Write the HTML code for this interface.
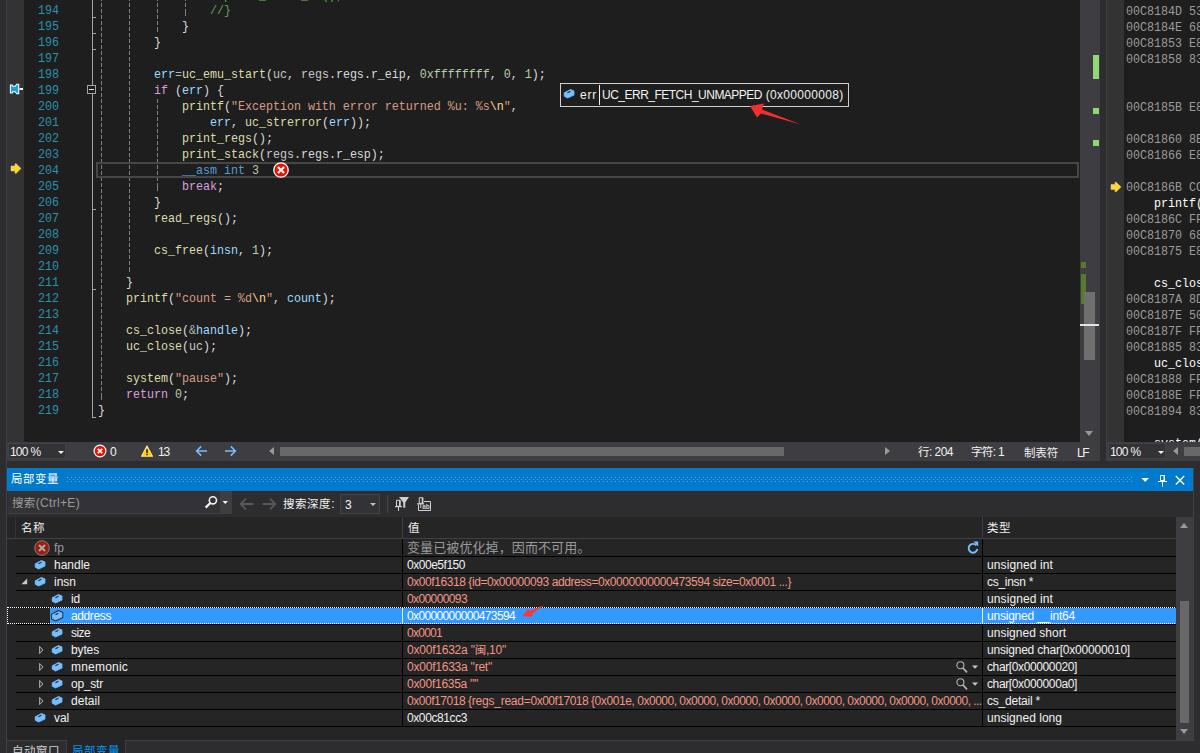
<!DOCTYPE html>
<html lang="zh-CN">
<head>
<meta charset="utf-8">
<title>Visual Studio - 局部变量</title>
<style>
*{box-sizing:border-box;margin:0;padding:0}
html,body{width:1200px;height:753px;overflow:hidden;background:#2d2d30}
body{position:relative;font-family:"Liberation Sans","Noto Sans CJK SC",sans-serif;font-size:12px;color:#f1f1f1}
.abs{position:absolute}
.ui{font-family:"Liberation Sans","Noto Sans CJK SC",sans-serif;font-size:12px;white-space:pre}
#ed{position:absolute;left:0;top:0;width:1100px;height:442px;background:#1e1e1e;overflow:hidden}
.mono{font-family:"Liberation Mono","DejaVu Sans Mono",monospace;font-size:11.7px;letter-spacing:-0.021px;white-space:pre}
.cl{position:absolute;height:16px;line-height:16px;transform:scaleY(1.1);transform-origin:0 11px;margin-top:1px}
.ln{position:absolute;left:38px;width:21px;height:16px;line-height:16px;color:#2b91af;text-align:right;transform:scaleY(1.1);transform-origin:0 11px;margin-top:1px}
.p{color:#dcdcdc}.v{color:#9cdcfe}.f{color:#dcdcaa}.k{color:#569cd6}.c{color:#d8a0df}
.s{color:#d69d85}.n{color:#b5cea8}.m{color:#57a64a}.e{color:#ffd68f}.o{color:#b4b4b4}.mb{color:#dadada}.gv{color:#c8c8c8}
.g{position:absolute;width:1px;background:repeating-linear-gradient(to bottom,#808080 0,#808080 4px,transparent 4px,transparent 6px)}
</style>
</head>
<body>

<div id="ed">
<div class="abs" style="left:0;top:0;width:6px;height:442px;background:#2d2d30"></div>
<div class="abs" style="left:6px;top:0;width:1px;height:442px;background:#3f3f46"></div>
<div class="abs" style="left:7px;top:0;width:17px;height:442px;background:#333333"></div>
<div class="g" style="left:101px;top:0px;height:400px;background-position:0 -3px"></div>
<div class="g" style="left:129px;top:0px;height:272px;background-position:0 -3px"></div>
<div class="g" style="left:157px;top:0px;height:32px;background-position:0 -3px"></div>
<div class="g" style="left:157px;top:98px;height:94px;background-position:0 -5px"></div>
<div class="g" style="left:185px;top:0px;height:16px;background-position:0 -3px"></div>
<div class="abs" style="left:92px;top:0;width:1px;height:418px;background:#a5a5a5"></div>
<div class="abs" style="left:92px;top:17px;width:4px;height:1px;background:#a5a5a5"></div>
<div class="abs" style="left:92px;top:33px;width:4px;height:1px;background:#a5a5a5"></div>
<div class="abs" style="left:92px;top:49px;width:4px;height:1px;background:#a5a5a5"></div>
<div class="abs" style="left:92px;top:209px;width:4px;height:1px;background:#a5a5a5"></div>
<div class="abs" style="left:92px;top:289px;width:4px;height:1px;background:#a5a5a5"></div>
<div class="abs" style="left:92px;top:417px;width:4px;height:1px;background:#a5a5a5"></div>
<div class="abs" style="left:87px;top:85px;width:9px;height:9px;background:#1e1e1e;border:1px solid #a5a5a5"></div>
<div class="abs" style="left:89px;top:89px;width:5px;height:1px;background:#e6e6e6"></div>
<div class="abs" style="left:96px;top:162px;width:983px;height:16px;border:2px solid #464646"></div>
<div class="ln mono" style="top:-13px">193</div>
<div class="cl mono" style="left:210px;top:-13px"><span class="m">//print_stack_ex();</span></div>
<div class="ln mono" style="top:2px">194</div>
<div class="cl mono" style="left:210px;top:2px"><span class="m">//}</span></div>
<div class="ln mono" style="top:18px">195</div>
<div class="cl mono" style="left:182px;top:18px"><span class="p">}</span></div>
<div class="ln mono" style="top:34px">196</div>
<div class="cl mono" style="left:154px;top:34px"><span class="p">}</span></div>
<div class="ln mono" style="top:50px">197</div>
<div class="ln mono" style="top:66px">198</div>
<div class="cl mono" style="left:154px;top:66px"><span class="v">err</span><span class="o">=</span><span class="f">uc_emu_start</span><span class="p">(</span><span class="gv">uc</span><span class="p">, </span><span class="gv">regs</span><span class="p">.</span><span class="mb">regs</span><span class="p">.</span><span class="mb">r_eip</span><span class="p">, </span><span class="n">0xffffffff</span><span class="p">, </span><span class="n">0</span><span class="p">, </span><span class="n">1</span><span class="p">);</span></div>
<div class="ln mono" style="top:82px">199</div>
<div class="cl mono" style="left:154px;top:82px"><span class="c">if</span><span class="p"> (</span><span class="v">err</span><span class="p">) {</span></div>
<div class="ln mono" style="top:98px">200</div>
<div class="cl mono" style="left:182px;top:98px"><span class="f">printf</span><span class="p">(</span><span class="s">"Exception with error returned %u: %s</span><span class="e">\n</span><span class="s">"</span><span class="p">,</span></div>
<div class="ln mono" style="top:114px">201</div>
<div class="cl mono" style="left:210px;top:114px"><span class="v">err</span><span class="p">, </span><span class="f">uc_strerror</span><span class="p">(</span><span class="v">err</span><span class="p">));</span></div>
<div class="ln mono" style="top:130px">202</div>
<div class="cl mono" style="left:182px;top:130px"><span class="f">print_regs</span><span class="p">();</span></div>
<div class="ln mono" style="top:146px">203</div>
<div class="cl mono" style="left:182px;top:146px"><span class="f">print_stack</span><span class="p">(</span><span class="gv">regs</span><span class="p">.</span><span class="mb">regs</span><span class="p">.</span><span class="mb">r_esp</span><span class="p">);</span></div>
<div class="ln mono" style="top:162px">204</div>
<div class="cl mono" style="left:182px;top:162px"><span class="k">__asm</span><span class="p"> </span><span class="k">int</span><span class="p"> </span><span class="n">3</span></div>
<div class="ln mono" style="top:178px">205</div>
<div class="cl mono" style="left:182px;top:178px"><span class="c">break</span><span class="p">;</span></div>
<div class="ln mono" style="top:194px">206</div>
<div class="cl mono" style="left:154px;top:194px"><span class="p">}</span></div>
<div class="ln mono" style="top:210px">207</div>
<div class="cl mono" style="left:154px;top:210px"><span class="f">read_regs</span><span class="p">();</span></div>
<div class="ln mono" style="top:226px">208</div>
<div class="ln mono" style="top:242px">209</div>
<div class="cl mono" style="left:154px;top:242px"><span class="f">cs_free</span><span class="p">(</span><span class="v">insn</span><span class="p">, </span><span class="n">1</span><span class="p">);</span></div>
<div class="ln mono" style="top:258px">210</div>
<div class="ln mono" style="top:274px">211</div>
<div class="cl mono" style="left:126px;top:274px"><span class="p">}</span></div>
<div class="ln mono" style="top:290px">212</div>
<div class="cl mono" style="left:126px;top:290px"><span class="f">printf</span><span class="p">(</span><span class="s">"count = %d</span><span class="e">\n</span><span class="s">"</span><span class="p">, </span><span class="v">count</span><span class="p">);</span></div>
<div class="ln mono" style="top:306px">213</div>
<div class="ln mono" style="top:322px">214</div>
<div class="cl mono" style="left:126px;top:322px"><span class="f">cs_close</span><span class="p">(</span><span class="o">&amp;</span><span class="v">handle</span><span class="p">);</span></div>
<div class="ln mono" style="top:338px">215</div>
<div class="cl mono" style="left:126px;top:338px"><span class="f">uc_close</span><span class="p">(</span><span class="gv">uc</span><span class="p">);</span></div>
<div class="ln mono" style="top:354px">216</div>
<div class="ln mono" style="top:370px">217</div>
<div class="cl mono" style="left:126px;top:370px"><span class="f">system</span><span class="p">(</span><span class="s">"pause"</span><span class="p">);</span></div>
<div class="ln mono" style="top:386px">218</div>
<div class="cl mono" style="left:126px;top:386px"><span class="c">return</span><span class="p"> </span><span class="n">0</span><span class="p">;</span></div>
<div class="ln mono" style="top:402px">219</div>
<div class="cl mono" style="left:98px;top:402px"><span class="p">}</span></div>
<svg class="abs" style="left:0;top:0" width="30" height="200" viewBox="0 0 30 200">
<polygon points="10.9,85.6 12,85.6 12.6,86.8 15.4,86.8 17,84.7 18.2,84.7 18.2,93.3 17,93.3 15.4,91.2 12.6,91.2 12,92.4 10.9,92.4" fill="#ffffff" stroke="#ffffff" stroke-width="2.1" stroke-linejoin="miter"/>
<polygon points="10.9,85.6 12,85.6 12.6,86.8 15.4,86.8 17,84.7 18.2,84.7 18.2,93.3 17,93.3 15.4,91.2 12.6,91.2 12,92.4 10.9,92.4" fill="#1ba1e2"/>
<rect x="19.5" y="88" width="3.5" height="2" fill="#f4f4f4"/>
<polygon points="11,166 15,166 15,163.8 16.2,163.8 21,168.5 16.2,173.2 15,173.2 15,171 11,171" fill="#ffd81e" stroke="#c8c8c8" stroke-width="0.6"/>
</svg>
<svg class="abs" style="left:273px;top:162px" width="16" height="16" viewBox="0 0 16 16">
<circle cx="8" cy="8" r="7.2" fill="#e41400" stroke="#ffffff" stroke-width="1.3"/>
<path d="M4.9 4.9 L11.1 11.1 M11.1 4.9 L4.9 11.1" stroke="#ffffff" stroke-width="2.1" stroke-linecap="butt"/>
</svg>
<div class="abs" style="left:560px;top:83px;width:289px;height:24px;background:#1e1e1e;border:1px solid #d0d0d0"></div>
<svg class="abs" style="left:562.5px;top:88px" width="12" height="11" viewBox="0 0 12 11"><polygon points="1.2,4.8 7.4,1.5 11,2.9 11,7.1 4.6,10 1.2,8.2" fill="#75beff" stroke="#75beff" stroke-width="0.8" stroke-linejoin="round"/><path d="M4.4 4.7 L7.4 3.3" stroke="#1e1e1e" stroke-width="1.1"/></svg>
<div class="abs ui" style="left:580px;top:87px;line-height:16px;color:#f1f1f1;letter-spacing:0.778px;">err</div>
<div class="abs" style="left:599px;top:85px;width:1px;height:20px;background:#f1f1f1"></div>
<div class="abs ui" style="left:602px;top:87px;line-height:16px;color:#f1f1f1;letter-spacing:-0.509px;">UC_ERR_FETCH_UNMAPPED</div>
<div class="abs ui" style="left:762px;top:87px;line-height:16px;color:#f1f1f1;letter-spacing:0.316px;"> (0x00000008)</div>
<svg class="abs" style="left:740px;top:100px" width="70" height="30" viewBox="740 100 70 30">
<polygon points="750,106 764,103.5 762,109.5 801,124.5 761,113.5 757,117.5" fill="#f03030"/>
</svg>
<div class="abs" style="left:1080px;top:0;width:20px;height:442px;background:#3e3e42"></div>
<div class="abs" style="left:1093px;top:55px;width:6px;height:24px;background:#8fd873"></div>
<div class="abs" style="left:1093px;top:108px;width:6px;height:6px;background:#8fd873"></div>
<div class="abs" style="left:1093px;top:140px;width:6px;height:6px;background:#8fd873"></div>
<div class="abs" style="left:1081px;top:262px;width:5px;height:6px;background:#577b2c"></div>
<div class="abs" style="left:1081px;top:274px;width:5px;height:30px;background:#577b2c"></div>
<div class="abs" style="left:1084px;top:292px;width:11px;height:68px;background:#6f6f6f"></div>
<div class="abs" style="left:1080px;top:324px;width:19px;height:2px;background:#e4e4e4"></div>
<div class="abs" style="left:1085px;top:431px;width:0;height:0;border-left:4.5px solid transparent;border-right:4.5px solid transparent;border-top:5px solid #999999"></div>
</div>
<div class="abs" style="left:6px;top:0;width:1px;height:753px;background:#3f3f46"></div>
<div class="abs" style="left:7px;top:442px;width:1093px;height:19px;background:#3e3e42"></div>
<div class="abs" style="left:8px;top:443px;width:58px;height:16px;background:#333337;border:1px solid #434346"></div>
<div class="abs ui" style="left:10px;top:444px;line-height:16px;color:#f1f1f1;letter-spacing:-0.840px;">100</div>
<div class="abs ui" style="left:30.5px;top:444px;line-height:16px;color:#f1f1f1;letter-spacing:-0.670px;">%</div>
<div class="abs" style="left:58px;top:451px;width:0;height:0;border-left:3px solid transparent;border-right:3px solid transparent;border-top:3.5px solid #f1f1f1"></div>
<svg class="abs" style="left:93px;top:444px" width="14" height="14" viewBox="0 0 14 14">
<circle cx="7" cy="7" r="5.9" fill="#e41400" stroke="#ffffff" stroke-width="1.2"/>
<path d="M4.8 4.8 L9.2 9.2 M9.2 4.8 L4.8 9.2" stroke="#ffffff" stroke-width="1.7"/>
</svg>
<div class="abs ui" style="left:110px;top:444px;line-height:16px;color:#f1f1f1;letter-spacing:-0.674px;">0</div>
<svg class="abs" style="left:140px;top:444px" width="14" height="14" viewBox="0 0 14 14">
<path d="M7 2 L12.4 12.2 L1.6 12.2 Z" fill="#ffcc00" stroke="#ffe27a" stroke-width="1.2" stroke-linejoin="round"/>
<rect x="6.3" y="5.2" width="1.5" height="3.8" fill="#1e1e1e"/><rect x="6.3" y="9.8" width="1.5" height="1.4" fill="#1e1e1e"/>
</svg>
<div class="abs ui" style="left:158px;top:444px;line-height:16px;color:#f1f1f1;letter-spacing:-1.174px;">13</div>
<svg class="abs" style="left:194px;top:444px" width="46" height="14" viewBox="0 0 46 14">
<path d="M13 7 H2.8 M7.2 2.4 L2.6 7 L7.2 11.6" stroke="#75beff" stroke-width="1.5" fill="none"/>
<path d="M31 7 H41.2 M36.8 2.4 L41.4 7 L36.8 11.6" stroke="#75beff" stroke-width="1.5" fill="none"/>
</svg>
<div class="abs" style="left:269px;top:447px;width:0;height:0;border-top:4.5px solid transparent;border-bottom:4.5px solid transparent;border-right:5px solid #999999"></div>
<div class="abs" style="left:280px;top:447px;width:504px;height:9px;background:#686868"></div>
<div class="abs" style="left:885px;top:447px;width:0;height:0;border-top:4.5px solid transparent;border-bottom:4.5px solid transparent;border-left:5px solid #999999"></div>
<div class="abs ui" style="left:918px;top:444px;line-height:16px;color:#f1f1f1;letter-spacing:-0.532px;"><span style="font-size:11.5px">行</span>: 204</div>
<div class="abs ui" style="left:971px;top:444px;line-height:16px;color:#f1f1f1;letter-spacing:-0.668px;"><span style="font-size:11.5px">字符</span>: 1</div>
<div class="abs ui" style="left:1024px;top:445px;line-height:16px;color:#f1f1f1;letter-spacing:-0.167px;"><span style="font-size:11.5px">制表符</span></div>
<div class="abs ui" style="left:1077px;top:445px;line-height:16px;color:#f1f1f1;letter-spacing:-1.502px;">LF</div>
<div class="abs" style="left:1100px;top:0;width:6px;height:461px;background:#2d2d30"></div>
<div class="abs" style="left:1106px;top:0;width:1px;height:461px;background:#3f3f46"></div>
<div id="dis" class="abs" style="left:1107px;top:0;width:93px;height:442px;background:#1e1e1e;overflow:hidden">
<div class="abs" style="left:0;top:0;width:17px;height:442px;background:#333333"></div>
<div class="cl mono" style="left:19px;top:3px;color:#9b9b9b">00C8184D 53</div>
<div class="cl mono" style="left:19px;top:19px;color:#9b9b9b">00C8184E 68</div>
<div class="cl mono" style="left:19px;top:35px;color:#9b9b9b">00C81853 E8</div>
<div class="cl mono" style="left:19px;top:51px;color:#9b9b9b">00C81858 83</div>
<div class="cl mono" style="left:19px;top:99px;color:#9b9b9b">00C8185B E8</div>
<div class="cl mono" style="left:19px;top:131px;color:#9b9b9b">00C81860 8B</div>
<div class="cl mono" style="left:19px;top:147px;color:#9b9b9b">00C81866 E8</div>
<div class="cl mono" style="left:19px;top:179px;color:#9b9b9b">00C8186B CC</div>
<div class="cl mono" style="left:19px;top:195px;color:#ffffff">    printf("Exception</div>
<div class="cl mono" style="left:19px;top:211px;color:#9b9b9b">00C8186C FF</div>
<div class="cl mono" style="left:19px;top:227px;color:#9b9b9b">00C81870 68</div>
<div class="cl mono" style="left:19px;top:243px;color:#9b9b9b">00C81875 E8</div>
<div class="cl mono" style="left:19px;top:275px;color:#ffffff">    cs_close(&amp;handle);</div>
<div class="cl mono" style="left:19px;top:291px;color:#9b9b9b">00C8187A 8D</div>
<div class="cl mono" style="left:19px;top:307px;color:#9b9b9b">00C8187E 50</div>
<div class="cl mono" style="left:19px;top:323px;color:#9b9b9b">00C8187F FF</div>
<div class="cl mono" style="left:19px;top:339px;color:#9b9b9b">00C81885 83</div>
<div class="cl mono" style="left:19px;top:355px;color:#ffffff">    uc_close(uc);</div>
<div class="cl mono" style="left:19px;top:371px;color:#9b9b9b">00C81888 FF</div>
<div class="cl mono" style="left:19px;top:387px;color:#9b9b9b">00C8188E FF</div>
<div class="cl mono" style="left:19px;top:403px;color:#9b9b9b">00C81894 83</div>
<div class="cl mono" style="left:19px;top:435px;color:#ffffff">    system("pause");</div>
<svg class="abs" style="left:0;top:178.5px" width="17" height="16" viewBox="0 0 17 16">
<polygon points="4,5.5 8,5.5 8,3.3 9.2,3.3 14,8 9.2,12.7 8,12.7 8,10.5 4,10.5" fill="#ffd81e" stroke="#c8c8c8" stroke-width="0.6"/>
</svg>
</div>
<div class="abs" style="left:1107px;top:442px;width:93px;height:19px;background:#3e3e42"></div>
<div class="abs" style="left:1108px;top:443px;width:58px;height:16px;background:#333337;border:1px solid #434346"></div>
<div class="abs ui" style="left:1110px;top:444px;line-height:16px;color:#f1f1f1;letter-spacing:-0.840px;">100</div>
<div class="abs ui" style="left:1130.5px;top:444px;line-height:16px;color:#f1f1f1;letter-spacing:-0.670px;">%</div>
<div class="abs" style="left:1158px;top:451px;width:0;height:0;border-left:3px solid transparent;border-right:3px solid transparent;border-top:3.5px solid #f1f1f1"></div>
<div class="abs" style="left:1173px;top:447px;width:0;height:0;border-top:4.5px solid transparent;border-bottom:4.5px solid transparent;border-right:5px solid #999999"></div>
<div class="abs" style="left:1184px;top:447px;width:16px;height:9px;background:#686868"></div>
<div class="abs" style="left:1193px;top:468px;width:1px;height:273px;background:#3f3f46"></div>
<div class="abs" style="left:7px;top:468px;width:1186px;height:23px;background:#007acc"></div>
<div class="abs ui" style="left:11px;top:471px;line-height:16px;color:#ffffff;letter-spacing:0.500px;"><span style="font-size:11.5px">局部变量</span></div>
<svg class="abs" style="left:67px;top:477px" width="1066" height="5"><defs><pattern id="dp" width="4" height="4" patternUnits="userSpaceOnUse"><rect x="0" y="0" width="1" height="1" fill="#59a8de"/><rect x="2" y="2" width="1" height="1" fill="#59a8de"/></pattern></defs><rect width="1066" height="5" fill="url(#dp)"/></svg>
<svg class="abs" style="left:1136px;top:471px" width="56" height="18" viewBox="0 0 56 18">
<polygon points="5.3,7 13,7 9.15,11" fill="#ffffff"/>
<path d="M24.5 4.5 h4 v5 h-4 z" stroke="#ffffff" stroke-width="1" fill="none"/>
<rect x="27.5" y="4" width="1.5" height="6" fill="#ffffff"/>
<rect x="22" y="10" width="9" height="1" fill="#ffffff"/>
<rect x="26" y="11" width="1" height="4.5" fill="#ffffff"/>
<path d="M39.8 5 L48.2 13.4 M48.2 5 L39.8 13.4" stroke="#ffffff" stroke-width="1.4"/>
</svg>
<div class="abs" style="left:7px;top:491px;width:1186px;height:26px;background:#2d2d30"></div>
<div class="abs" style="left:8px;top:491px;width:224px;height:23px;background:#333337;border-bottom:1px solid #3f3f46"></div>
<div class="abs" style="left:220px;top:491px;width:12px;height:22px;background:#3e3e42"></div>
<div class="abs ui" style="left:12px;top:495px;line-height:16px;color:#999999;letter-spacing:0.333px;"><span style="font-size:11.5px">搜索</span>(Ctrl+E)</div>
<svg class="abs" style="left:202px;top:493px" width="30" height="18" viewBox="0 0 30 18">
<circle cx="10.9" cy="7.3" r="3.6" fill="none" stroke="#f1f1f1" stroke-width="1.6"/>
<path d="M8.3 10 L3.6 14.6" stroke="#f1f1f1" stroke-width="2.2"/>
<polygon points="20.5,8 26,8 23.25,11" fill="#f1f1f1"/>
</svg>
<svg class="abs" style="left:238px;top:497px" width="40" height="14" viewBox="0 0 40 14">
<path d="M15.5 7 H3 M8 1.6 L2.6 7 L8 12.4" stroke="#58585b" stroke-width="1.8" fill="none"/>
<path d="M24.5 7 H37 M32 1.6 L37.4 7 L32 12.4" stroke="#58585b" stroke-width="1.8" fill="none"/>
</svg>
<div class="abs ui" style="left:283px;top:496px;line-height:16px;color:#f1f1f1;letter-spacing:0.533px;"><span style="font-size:11.5px">搜索深度</span>:</div>
<div class="abs" style="left:340px;top:494px;width:40px;height:20px;background:#333337;border:1px solid #434346"></div>
<div class="abs ui" style="left:345px;top:497px;line-height:16px;color:#f1f1f1;letter-spacing:-0.674px;">3</div>
<div class="abs" style="left:370px;top:503px;width:0;height:0;border-left:3px solid transparent;border-right:3px solid transparent;border-top:3.5px solid #c0c0c0"></div>
<div class="abs" style="left:387px;top:495px;width:1px;height:18px;background:#46464a"></div>
<svg class="abs" style="left:393px;top:495px" width="42" height="18" viewBox="0 0 42 18">
<g fill="#d0d0d0">
<polygon points="6,2 16,2 12.25,7.5 12.25,12.75 10.25,12.75 10.25,7.5"/>
<rect x="3" y="4.75" width="4.5" height="6.5" fill="#2d2d30"/>
<path d="M3.5 5.25 h3.5 v6 h-3.5 z" fill="none" stroke="#d0d0d0" stroke-width="1"/>
<rect x="6" y="5" width="1.5" height="6"/>
<rect x="2" y="11" width="7" height="1.2"/>
<rect x="5" y="12" width="1" height="4"/>
<path d="M31 6.5 H37.5 V15.5 H25.5 V9.5" fill="none" stroke="#d0d0d0" stroke-width="1"/>
<path d="M26.25 2.75 h3.5 v5.5 h-3.5 z" fill="none" stroke="#d0d0d0" stroke-width="1"/>
<rect x="28.75" y="2.5" width="1.5" height="6"/>
<rect x="24" y="8.25" width="7" height="1.2"/>
<rect x="27.25" y="9.25" width="1" height="3.75"/>
<text x="29.2" y="14" font-family="Liberation Sans, sans-serif" font-size="6.5" font-weight="bold" fill="#d0d0d0">ab</text>
</g>
</svg>
<div class="abs" style="left:7px;top:517px;width:1186px;height:223px;background:#252526"></div>
<div class="abs" style="left:7px;top:538px;width:1169px;height:1px;background:#3f3f46"></div>
<div class="abs" style="left:15px;top:517px;width:1px;height:21px;background:#333337"></div>
<div class="abs" style="left:402px;top:517px;width:1px;height:21px;background:#3f3f46"></div>
<div class="abs" style="left:982px;top:517px;width:1px;height:21px;background:#3f3f46"></div>
<div class="abs ui" style="left:21px;top:520px;line-height:16px;color:#f1f1f1;letter-spacing:0.500px;"><span style="font-size:11.5px">名称</span></div>
<div class="abs ui" style="left:408px;top:520px;line-height:16px;color:#f1f1f1;letter-spacing:0.500px;"><span style="font-size:11.5px">值</span></div>
<div class="abs ui" style="left:987px;top:520px;line-height:16px;color:#f1f1f1;letter-spacing:0.500px;"><span style="font-size:11.5px">类型</span></div>
<div class="abs" style="left:16px;top:556px;width:1160px;height:1px;background:#000000"></div>
<svg class="abs" style="left:34px;top:540px" width="16" height="16" viewBox="0 0 16 16"><circle cx="8" cy="8" r="7.3" fill="#9b1c10" stroke="#8a8a8a" stroke-width="0.9"/><path d="M5 5 L11 11 M11 5 L5 11" stroke="#a8a8a8" stroke-width="2"/></svg>
<div class="abs ui" style="left:54px;top:540px;line-height:16px;color:#999999;letter-spacing:-0.004px;">fp</div>
<div class="abs ui" style="left:407px;top:540px;line-height:16px;color:#999999;letter-spacing:0.100px;font-size:13px;">变量已被优化掉，因而不可用。</div>
<div class="abs" style="left:16px;top:573px;width:1160px;height:1px;background:#000000"></div>
<svg class="abs" style="left:34px;top:559px" width="12" height="11" viewBox="0 0 12 11"><polygon points="1.2,4.8 7.4,1.5 11,2.9 11,7.1 4.6,10 1.2,8.2" fill="#75beff" stroke="#75beff" stroke-width="0.8" stroke-linejoin="round"/><path d="M4.4 4.7 L7.4 3.3" stroke="#252526" stroke-width="1.1"/></svg>
<div class="abs ui" style="left:54px;top:557px;line-height:16px;color:#f1f1f1;letter-spacing:-0.006px;">handle</div>
<div class="abs ui" style="left:407px;top:557px;line-height:16px;color:#f1f1f1;letter-spacing:-0.472px;">0x00e5f150</div>
<div class="abs ui" style="left:987px;top:557px;line-height:16px;color:#f1f1f1;letter-spacing:0.107px;">unsigned int</div>
<div class="abs" style="left:16px;top:590px;width:1160px;height:1px;background:#000000"></div>
<svg class="abs" style="left:34px;top:576px" width="12" height="11" viewBox="0 0 12 11"><polygon points="1.2,4.8 7.4,1.5 11,2.9 11,7.1 4.6,10 1.2,8.2" fill="#75beff" stroke="#75beff" stroke-width="0.8" stroke-linejoin="round"/><path d="M4.4 4.7 L7.4 3.3" stroke="#252526" stroke-width="1.1"/></svg>
<div class="abs ui" style="left:54px;top:574px;line-height:16px;color:#f1f1f1;letter-spacing:-0.003px;">insn</div>
<svg class="abs" style="left:21px;top:578px" width="7" height="7"><polygon points="6.2,0.4 6.2,6.2 0.4,6.2" fill="#c8c8c8"/></svg>
<div class="abs ui" style="left:407px;top:574px;line-height:16px;color:#f19583;letter-spacing:-0.426px;">0x00f16318 {id=0x00000093 address=0x0000000000473594 size=0x0001 ...}</div>
<div class="abs ui" style="left:987px;top:574px;line-height:16px;color:#f1f1f1;letter-spacing:-0.299px;">cs_insn *</div>
<div class="abs" style="left:16px;top:607px;width:1160px;height:1px;background:#000000"></div>
<svg class="abs" style="left:51px;top:593px" width="12" height="11" viewBox="0 0 12 11"><polygon points="1.2,4.8 7.4,1.5 11,2.9 11,7.1 4.6,10 1.2,8.2" fill="#75beff" stroke="#75beff" stroke-width="0.8" stroke-linejoin="round"/><path d="M4.4 4.7 L7.4 3.3" stroke="#252526" stroke-width="1.1"/></svg>
<div class="abs ui" style="left:71px;top:591px;line-height:16px;color:#f1f1f1;letter-spacing:-0.170px;">id</div>
<div class="abs ui" style="left:407px;top:591px;line-height:16px;color:#f19583;letter-spacing:-0.606px;">0x00000093</div>
<div class="abs ui" style="left:987px;top:591px;line-height:16px;color:#f1f1f1;letter-spacing:0.107px;">unsigned int</div>
<div class="abs" style="left:16px;top:624px;width:1160px;height:1px;background:#000000"></div>
<div class="abs" style="left:50px;top:608px;width:1126px;height:16px;background:#3399ff"></div>
<svg class="abs" style="left:50px;top:609px" width="14" height="13" viewBox="-1 -1 14 13"><polygon points="1.2,4.8 7.4,1.5 11,2.9 11,7.1 4.6,10 1.2,8.2" fill="#1e1e1e" stroke="#1e1e1e" stroke-width="2.6" stroke-linejoin="round"/></svg>
<svg class="abs" style="left:51px;top:610px" width="12" height="11" viewBox="0 0 12 11"><polygon points="1.2,4.8 7.4,1.5 11,2.9 11,7.1 4.6,10 1.2,8.2" fill="#75beff" stroke="#75beff" stroke-width="0.8" stroke-linejoin="round"/><path d="M4.4 4.7 L7.4 3.3" stroke="#252526" stroke-width="1.1"/></svg>
<div class="abs ui" style="left:71px;top:608px;line-height:16px;color:#ffffff;letter-spacing:-0.384px;">address</div>
<div class="abs ui" style="left:407px;top:608px;line-height:16px;color:#ffffff;letter-spacing:-0.636px;">0x0000000000473594</div>
<div class="abs ui" style="left:987px;top:608px;line-height:16px;color:#ffffff;letter-spacing:-0.213px;">unsigned __int64</div>
<div class="abs" style="left:16px;top:641px;width:1160px;height:1px;background:#000000"></div>
<svg class="abs" style="left:51px;top:627px" width="12" height="11" viewBox="0 0 12 11"><polygon points="1.2,4.8 7.4,1.5 11,2.9 11,7.1 4.6,10 1.2,8.2" fill="#75beff" stroke="#75beff" stroke-width="0.8" stroke-linejoin="round"/><path d="M4.4 4.7 L7.4 3.3" stroke="#252526" stroke-width="1.1"/></svg>
<div class="abs ui" style="left:71px;top:625px;line-height:16px;color:#f1f1f1;letter-spacing:-0.585px;">size</div>
<div class="abs ui" style="left:407px;top:625px;line-height:16px;color:#f19583;letter-spacing:-0.728px;">0x0001</div>
<div class="abs ui" style="left:987px;top:625px;line-height:16px;color:#f1f1f1;letter-spacing:0.020px;">unsigned short</div>
<div class="abs" style="left:16px;top:658px;width:1160px;height:1px;background:#000000"></div>
<svg class="abs" style="left:51px;top:644px" width="12" height="11" viewBox="0 0 12 11"><polygon points="1.2,4.8 7.4,1.5 11,2.9 11,7.1 4.6,10 1.2,8.2" fill="#75beff" stroke="#75beff" stroke-width="0.8" stroke-linejoin="round"/><path d="M4.4 4.7 L7.4 3.3" stroke="#252526" stroke-width="1.1"/></svg>
<div class="abs ui" style="left:71px;top:642px;line-height:16px;color:#f1f1f1;letter-spacing:-0.136px;">bytes</div>
<svg class="abs" style="left:39px;top:645px" width="6" height="10"><polygon points="0.6,1.4 4,5 0.6,8.6" fill="#3a3a3c" stroke="#b8b8b8" stroke-width="0.9"/></svg>
<div class="abs ui" style="left:407px;top:642px;line-height:16px;color:#f19583;letter-spacing:-0.221px;">0x00f1632a "<span style="font-size:11.5px">闽</span>,10"</div>
<div class="abs ui" style="left:987px;top:642px;line-height:16px;color:#f1f1f1;letter-spacing:-0.205px;">unsigned char[0x00000010]</div>
<div class="abs" style="left:16px;top:675px;width:1160px;height:1px;background:#000000"></div>
<svg class="abs" style="left:51px;top:661px" width="12" height="11" viewBox="0 0 12 11"><polygon points="1.2,4.8 7.4,1.5 11,2.9 11,7.1 4.6,10 1.2,8.2" fill="#75beff" stroke="#75beff" stroke-width="0.8" stroke-linejoin="round"/><path d="M4.4 4.7 L7.4 3.3" stroke="#252526" stroke-width="1.1"/></svg>
<div class="abs ui" style="left:71px;top:659px;line-height:16px;color:#f1f1f1;letter-spacing:0.206px;">mnemonic</div>
<svg class="abs" style="left:39px;top:662px" width="6" height="10"><polygon points="0.6,1.4 4,5 0.6,8.6" fill="#3a3a3c" stroke="#b8b8b8" stroke-width="0.9"/></svg>
<div class="abs ui" style="left:407px;top:659px;line-height:16px;color:#f19583;letter-spacing:-0.224px;">0x00f1633a "ret"</div>
<div class="abs ui" style="left:987px;top:659px;line-height:16px;color:#f1f1f1;letter-spacing:-0.380px;">char[0x00000020]</div>
<div class="abs" style="left:16px;top:692px;width:1160px;height:1px;background:#000000"></div>
<svg class="abs" style="left:51px;top:678px" width="12" height="11" viewBox="0 0 12 11"><polygon points="1.2,4.8 7.4,1.5 11,2.9 11,7.1 4.6,10 1.2,8.2" fill="#75beff" stroke="#75beff" stroke-width="0.8" stroke-linejoin="round"/><path d="M4.4 4.7 L7.4 3.3" stroke="#252526" stroke-width="1.1"/></svg>
<div class="abs ui" style="left:71px;top:676px;line-height:16px;color:#f1f1f1;letter-spacing:-0.225px;">op_str</div>
<svg class="abs" style="left:39px;top:679px" width="6" height="10"><polygon points="0.6,1.4 4,5 0.6,8.6" fill="#3a3a3c" stroke="#b8b8b8" stroke-width="0.9"/></svg>
<div class="abs ui" style="left:407px;top:676px;line-height:16px;color:#f19583;letter-spacing:-0.275px;">0x00f1635a ""</div>
<div class="abs ui" style="left:987px;top:676px;line-height:16px;color:#f1f1f1;letter-spacing:-0.380px;">char[0x000000a0]</div>
<div class="abs" style="left:16px;top:709px;width:1160px;height:1px;background:#000000"></div>
<svg class="abs" style="left:51px;top:695px" width="12" height="11" viewBox="0 0 12 11"><polygon points="1.2,4.8 7.4,1.5 11,2.9 11,7.1 4.6,10 1.2,8.2" fill="#75beff" stroke="#75beff" stroke-width="0.8" stroke-linejoin="round"/><path d="M4.4 4.7 L7.4 3.3" stroke="#252526" stroke-width="1.1"/></svg>
<div class="abs ui" style="left:71px;top:693px;line-height:16px;color:#f1f1f1;letter-spacing:0.052px;">detail</div>
<svg class="abs" style="left:39px;top:696px" width="6" height="10"><polygon points="0.6,1.4 4,5 0.6,8.6" fill="#3a3a3c" stroke="#b8b8b8" stroke-width="0.9"/></svg>
<div class="abs ui" style="left:407px;top:693px;line-height:16px;color:#f19583;letter-spacing:-0.460px;">0x00f17018 </div>
<div class="abs ui" style="left:468px;top:693px;line-height:16px;color:#f19583;letter-spacing:-0.232px;">{regs_read=</div>
<div class="abs ui" style="left:530.5px;top:693px;line-height:16px;color:#f19583;letter-spacing:-0.505px;">0x00f17018 </div>
<div class="abs ui" style="left:591px;top:693px;line-height:16px;color:#f19583;letter-spacing:-0.416px;">{0x001e, </div>
<div class="abs ui" style="left:637.3px;top:693px;line-height:16px;color:#f19583;letter-spacing:-0.505px;">0x0000, </div>
<div class="abs ui" style="left:679.3px;top:693px;line-height:16px;color:#f19583;letter-spacing:-0.505px;">0x0000, </div>
<div class="abs ui" style="left:721.3px;top:693px;line-height:16px;color:#f19583;letter-spacing:-0.505px;">0x0000, </div>
<div class="abs ui" style="left:763.3px;top:693px;line-height:16px;color:#f19583;letter-spacing:-0.505px;">0x0000, </div>
<div class="abs ui" style="left:805.3px;top:693px;line-height:16px;color:#f19583;letter-spacing:-0.505px;">0x0000, </div>
<div class="abs ui" style="left:847.3px;top:693px;line-height:16px;color:#f19583;letter-spacing:-0.505px;">0x0000, </div>
<div class="abs ui" style="left:889.3px;top:693px;line-height:16px;color:#f19583;letter-spacing:-0.505px;">0x0000, </div>
<div class="abs ui" style="left:931.3px;top:693px;line-height:16px;color:#f19583;letter-spacing:-0.505px;">0x0000, </div>
<div class="abs ui" style="left:973.3px;top:693px;line-height:16px;color:#f19583;letter-spacing:-0.667px;">...</div>
<div class="abs ui" style="left:987px;top:693px;line-height:16px;color:#f1f1f1;letter-spacing:-0.215px;">cs_detail *</div>
<div class="abs" style="left:16px;top:726px;width:1160px;height:1px;background:#000000"></div>
<svg class="abs" style="left:34px;top:712px" width="12" height="11" viewBox="0 0 12 11"><polygon points="1.2,4.8 7.4,1.5 11,2.9 11,7.1 4.6,10 1.2,8.2" fill="#75beff" stroke="#75beff" stroke-width="0.8" stroke-linejoin="round"/><path d="M4.4 4.7 L7.4 3.3" stroke="#252526" stroke-width="1.1"/></svg>
<div class="abs ui" style="left:54px;top:710px;line-height:16px;color:#f1f1f1;letter-spacing:-0.113px;">val</div>
<div class="abs ui" style="left:407px;top:710px;line-height:16px;color:#f1f1f1;letter-spacing:-0.404px;">0x00c81cc3</div>
<div class="abs ui" style="left:987px;top:710px;line-height:16px;color:#f1f1f1;letter-spacing:0.021px;">unsigned long</div>
<div class="abs" style="left:402px;top:539px;width:1px;height:187px;background:#000000"></div>
<div class="abs" style="left:982px;top:539px;width:1px;height:187px;background:#000000"></div>
<div class="abs" style="left:402px;top:608px;width:1px;height:16px;background:#e8e8e8"></div>
<div class="abs" style="left:982px;top:608px;width:1px;height:16px;background:#e8e8e8"></div>
<div class="abs" style="left:7px;top:607px;width:1170px;height:17px;border:1px dotted #ffffff"></div>
<svg class="abs" style="left:966px;top:541px" width="14" height="14" viewBox="0 0 14 14">
<path d="M10.4 4.4 A4.4 4.4 0 1 0 11.4 8" fill="none" stroke="#75beff" stroke-width="1.9"/>
<polygon points="7.4,0.6 12.2,0.6 12.2,5.4" fill="#75beff"/>
</svg>
<svg class="abs" style="left:955px;top:660px" width="26" height="14" viewBox="0 0 26 14">
<circle cx="5.4" cy="5.2" r="3.5" fill="none" stroke="#b4b4b4" stroke-width="1.1"/>
<path d="M8 8 L12 12.4" stroke="#b4b4b4" stroke-width="1.7"/>
<polygon points="17,5.5 23,5.5 20,8.7" fill="#c8c8c8"/>
</svg>
<svg class="abs" style="left:955px;top:677px" width="26" height="14" viewBox="0 0 26 14">
<circle cx="5.4" cy="5.2" r="3.5" fill="none" stroke="#b4b4b4" stroke-width="1.1"/>
<path d="M8 8 L12 12.4" stroke="#b4b4b4" stroke-width="1.7"/>
<polygon points="17,5.5 23,5.5 20,8.7" fill="#c8c8c8"/>
</svg>
<svg class="abs" style="left:520px;top:602px" width="26" height="18" viewBox="520 602 26 18">
<polygon points="522.2,616.6 528,608.7 529.6,611 544.2,605.1 532.2,613.8 532.8,616.6" fill="#ff3535"/>
</svg>
<div class="abs" style="left:1176px;top:517px;width:18px;height:224px;background:#3e3e42"></div>
<div class="abs" style="left:1180px;top:523px;width:0;height:0;border-left:4.5px solid transparent;border-right:4.5px solid transparent;border-bottom:5px solid #999999"></div>
<div class="abs" style="left:1180px;top:601px;width:9px;height:122px;background:#686868"></div>
<div class="abs" style="left:1180px;top:729px;width:0;height:0;border-left:4.5px solid transparent;border-right:4.5px solid transparent;border-top:5px solid #999999"></div>
<div class="abs" style="left:7px;top:740px;width:1193px;height:13px;background:#2d2d30"></div>
<div class="abs" style="left:125px;top:740px;width:1069px;height:1px;background:#3f3f46"></div>
<div class="abs" style="left:7px;top:740px;width:59px;height:1px;background:#3f3f46"></div>
<div class="abs" style="left:66px;top:739px;width:59px;height:14px;background:#252526"></div>
<div class="abs" style="left:66px;top:740px;width:1px;height:13px;background:#3f3f46"></div>
<div class="abs" style="left:125px;top:740px;width:1px;height:13px;background:#3f3f46"></div>
<div class="abs ui" style="left:12px;top:743px;line-height:16px;color:#d0d0d0;letter-spacing:0.500px;"><span style="font-size:11.5px">自动窗口</span></div>
<div class="abs ui" style="left:72px;top:743px;line-height:16px;color:#0097fb;letter-spacing:0.500px;"><span style="font-size:11.5px">局部变量</span></div>
</body>
</html>
